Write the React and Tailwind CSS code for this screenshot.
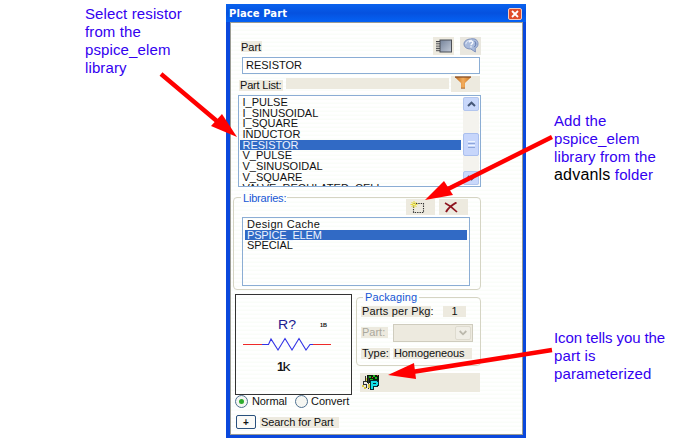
import React from "react";

const parts = ["I_PULSE", "I_SINUSOIDAL", "I_SQUARE", "INDUCTOR", "RESISTOR", "V_PULSE", "V_SINUSOIDAL", "V_SQUARE", "VALVE_REGULATED_CELL"];
const libraries = ["Design Cache", "PSPICE_ELEM", "SPECIAL"];

function Tag({ className = "", children }) {
  return <span className={`block shrink-0 whitespace-nowrap bg-[#edeadf] text-[11px] leading-[11px] h-[11px] ${className}`}>{children}</span>;
}

function ScrollButton({ down }) {
  return (
    <div className="flex h-[14px] w-[16px] shrink-0 items-center justify-center rounded-[2px] border border-[#b3c6ee] bg-[#c9d8fb]">
      <svg width="9" height="6" viewBox="0 0 9 6" fill="none" stroke="#465878" strokeWidth="2">
        <path d={down ? "M1 1L4.5 4.3L8 1" : "M1 5L4.5 1.7L8 5"} />
      </svg>
    </div>
  );
}

function PartIcon() {
  return (
    <svg width="18" height="14" viewBox="0 0 18 14">
      <defs>
        <linearGradient id="chip" x1="0" y1="0" x2="1" y2="1">
          <stop offset="0" stopColor="#75839a" />
          <stop offset="1" stopColor="#c3cbd8" />
        </linearGradient>
      </defs>
      <rect x="5" y="1" width="11.5" height="12" fill="url(#chip)" stroke="#4b4e56" />
      <path d="M1 2.5h4M1 4.8h4M1 7.1h4M1 9.4h4M1 11.7h4" stroke="#45464a" />
      <path d="M1 3.6h3M1 6h3M1 8.3h3M1 10.6h3" stroke="#b5b3ad" strokeWidth=".7" />
    </svg>
  );
}

function HelpIcon() {
  return (
    <svg width="16" height="15" viewBox="0 0 16 15">
      <path d="M7.5 1C12 0 15 2 15 5.8C15 8 14 9.7 12.2 10.3L12.4 14L7.8 11C3.5 11 1 9 1 6C1 3.2 3.5 1.3 7.5 1Z" fill="#a9bbdc" stroke="#7f92bd" />
      <path d="M2.7 6.2C3 3.5 6 2.1 9 2.4" stroke="#e0e8f7" strokeWidth="1.2" fill="none" />
      <path d="M6.2 4.4C6.6 2.6 10 2.6 9.8 4.6C9.7 5.9 8 5.8 8 7.2M8 8.2V9.4" stroke="#f6f9ff" strokeWidth="1.4" fill="none" />
      <path d="M11.7 3.2C13.5 5 13 7.5 11.2 9.2" stroke="#6178ae" fill="none" />
    </svg>
  );
}

function FilterIcon() {
  return (
    <svg width="18" height="13" viewBox="0 0 18 13">
      <defs>
        <linearGradient id="funnel">
          <stop offset="0" stopColor="#b8661f" />
          <stop offset=".5" stopColor="#f3ad5c" />
          <stop offset="1" stopColor="#c8701f" />
        </linearGradient>
      </defs>
      <path d="M.8 1h16.4L11 7v5.2H7V7Z" fill="url(#funnel)" />
      <path d="M1 1h16" stroke="#8c5127" strokeWidth="1.3" />
      <path d="M7 12.2h4" stroke="#9a5a24" strokeWidth=".8" />
    </svg>
  );
}

function Resistor() {
  return (
    <svg width="115" height="99" viewBox="0 0 115 99" fontFamily="'Liberation Sans', Arial, sans-serif">
      <text x="42" y="34" fontSize="12" fill="#202090" textLength="18" lengthAdjust="spacingAndGlyphs">R?</text>
      <text x="84" y="32" fontSize="5.5" fontWeight="bold" fill="#111">1B</text>
      <path d="M7 49.5h19M77 49.5h18" stroke="#ee2929" strokeWidth="1.1" />
      <path d="M26 49.5h6.5L35 44l7 11l7-11.5L56 55l7-11.5L70 55l4-5.5h3" fill="none" stroke="#3333e6" strokeWidth="1.1" />
      <text x="41" y="76" fontSize="12.5" fontWeight="bold" fill="#151515">1</text>
      <text x="46.5" y="76" fontSize="12" fill="#151515" textLength="8" lengthAdjust="spacingAndGlyphs">k</text>
    </svg>
  );
}

function ParamIcon() {
  return (
    <svg width="18" height="17" viewBox="0 0 18 17" shapeRendering="crispEdges">
      <path d="M5 1h12v8H5z" fill="#0a200a" />
      <path d="M7 2h2v2H7zM11 1h2v2h-2zM13 3h2v2h-2zM8 5h3v1H8z" fill="#20b920" />
      <path d="M10 3h1v1h-1zM15 1h1v1h-1z" fill="#d33a2a" />
      <path d="M3 2v5M1 7h4M1 7v3M1 10h3M4 10v4M6 2v13" stroke="#333" fill="none" />
      <path d="M0 11h2v2H0zM2 13h2v2H2zM4 4h1v3H4zM6 10h2v4H6z" fill="#dccb46" />
      <path d="M8 6h8v1h1v5h-1v1h-4v3H8z" fill="#062c35" />
      <path d="M9 7h6v1h1v3h-1v1h-4v3H9z" fill="#15dfe7" />
      <path d="M11 9h3v1h-3z" fill="#082b34" />
    </svg>
  );
}

function Radio({ checked }) {
  return (
    <span className="flex h-[13px] w-[13px] shrink-0 items-center justify-center rounded-full border border-[#4f7191] bg-[#f5f6f2]">
      {checked && <span className="h-[5px] w-[5px] rounded-full bg-[#2eac2e]" />}
    </span>
  );
}

function PlacePartDialog() {
  return (
    <div className="mt-[4px] flex h-[434px] w-[300px] shrink-0 flex-col bg-[#0a48dc] text-[11px] text-[#111]">
      <div className="flex h-[18px] shrink-0 items-center justify-between bg-linear-to-b from-[#0a62ee] via-[#0551df] to-[#0562f4] pr-[4px] pl-[3px]">
        <span className="pt-[2px] font-['DejaVu_Sans',Verdana,sans-serif] text-[10px] leading-[18px] font-bold tracking-[0.08px] text-white">Place Part</span>
        <span className="mt-[1px] flex h-[12px] w-[14px] items-center justify-center rounded-[2px] border border-[#f6c9bd] bg-[#df4b28]">
          <svg width="8" height="8" viewBox="0 0 8 8" stroke="#fff" strokeWidth="1.8"><path d="M1 1l6 6M7 1L1 7" /></svg>
        </span>
      </div>
      <div className="mr-[3px] ml-[4px] flex h-[413px] flex-col border border-[#9b9c94] bg-[repeating-linear-gradient(to_bottom,#fff_0px,#fff_2px,#fafdf9_3px,#fafdf9_4px)]">
        <div className="mt-[14px] ml-[10px] flex h-[18px]">
          <Tag className="mt-[4px] w-[21px] leading-[12px]">Part</Tag>
          <div className="ml-[171px] flex h-[18px] w-[21px] items-center justify-center bg-[#edeadf]"><PartIcon /></div>
          <div className="ml-[6px] flex h-[18px] w-[21px] items-start justify-center bg-[#e9e7df] pt-[1px]"><HelpIcon /></div>
        </div>
        <div className="mt-[2px] ml-[11px] h-[17px] w-[238px] border border-[#8badd4] bg-white pl-[3px] leading-[15px]">RESISTOR</div>
        <div className="mt-[2px] ml-[8px] flex h-[16px]">
          <Tag className="mt-[4px] w-[44px] pl-px tracking-[-0.2px]">Part List:</Tag>
          <div className="mt-[2px] ml-[3px] h-[11px] w-[163px] bg-[#edeadf]" />
          <div className="ml-[2px] flex h-[16px] w-[29px] justify-start bg-[#edeadf] pl-[3px]"><FilterIcon /></div>
        </div>
        <div className="mt-[3px] ml-[7px] flex h-[92px] w-[243px] shrink-0 justify-between border border-[#8badd4] bg-[repeating-linear-gradient(to_bottom,#fff_0px,#fff_2px,#fafdf9_3px,#fafdf9_4px)] p-px">
          <div className="h-[89px] w-[221px] overflow-hidden">
            {parts.map((p) => (
              <div key={p} className={`h-[10.7px] pl-[2.5px] leading-[11px] whitespace-nowrap ${p === "RESISTOR" ? "bg-[#316ac5] text-[#edf3ff]" : ""}`}>{p}</div>
            ))}
          </div>
          <div className="flex h-[88px] w-[16px] flex-col justify-between bg-[#f4f3ee]">
            <ScrollButton />
            <div className="mt-[6px] flex h-[23px] flex-col items-center justify-center gap-px rounded-[2px] border border-[#aabfee] bg-[#c7d6fb]">
              <i className="h-px w-[7px] bg-[#eef4fe]" /><i className="h-px w-[7px] bg-[#8ea6da]" /><i className="h-px w-[7px] bg-[#eef4fe]" /><i className="h-px w-[7px] bg-[#8ea6da]" />
            </div>
            <ScrollButton down />
          </div>
        </div>
        <div className="mt-[10px] ml-[2px] flex h-[93px] w-[248px] shrink-0 flex-col rounded-[4px] border border-[#d5d4c3]">
          <div className="flex h-[19px]">
            <span className="-mt-[6px] ml-[7px] h-[12px] w-[46px] bg-[#fdfefc] pl-[2px] leading-[12px] tracking-[-0.2px] text-[#1657d5]">Libraries:</span>
            <div className="mt-[1px] ml-[119px] flex h-[16px] w-[29px] items-center justify-center bg-[#edeadf] pr-[5px]">
              <svg width="16" height="13" viewBox="0 0 16 13">
                <path d="M3.5 2.5h10v9h-10z" fill="none" stroke="#333" strokeWidth="1.1" strokeDasharray="1.4 1" />
                <path d="M4 0v7M.5 3.5h7M1.5 1l5 5M6.5 1l-5 5" stroke="#e8dc32" strokeWidth="1" />
                <path d="M3.5 3h1v1h-1z" fill="#fff" />
              </svg>
            </div>
            <div className="mt-[1px] ml-[4px] flex h-[16px] w-[29px] items-center justify-center bg-[#edeadf] pr-[5px]">
              <svg width="14" height="11" viewBox="0 0 14 11" fill="none" stroke="#8e1620"><path d="M1 1C4 2.5 9 6 13 10" strokeWidth="1.7" /><path d="M12.500.5C8 3 4 6.5 2 10" strokeWidth="2" /></svg>
            </div>
          </div>
          <div className="ml-[8px] h-[69px] w-[228px] border border-[#8badd4] pt-[1px] pr-[2px] pl-[2px]">
            {libraries.map((l) => (
              <div key={l} className={`h-[10.7px] pl-[2px] leading-[11px] whitespace-nowrap ${l === "PSPICE_ELEM" ? "bg-[#316ac5] tracking-[-0.15px] text-[#edf3ff]" : l === "SPECIAL" ? "-tracking-[0.1px]" : "tracking-[0.35px]"}`}>{l}</div>
            ))}
          </div>
        </div>
        <div className="mt-[4px] ml-[4px] flex h-[101px] shrink-0">
          <div className="h-[101px] w-[117px] shrink-0 border border-[#333]"><Resistor /></div>
          <div className="ml-[4px] flex w-[125px] flex-col">
            <div className="mt-[3px] flex h-[69px] flex-col rounded-[4px] border border-[#d5d4c3] pl-[4px]">
              <span className="-mt-[6px] ml-[2px] h-[11px] w-[56px] bg-[#fdfefc] pl-[2px] leading-[11px] tracking-[0.1px] text-[#1657d5]">Packaging</span>
              <div className="mt-[3px] flex">
                <Tag className="w-[70px] pl-px tracking-[0.15px]">Parts per Pkg:</Tag>
                <Tag className="ml-[12px] w-[23px] text-center">1</Tag>
              </div>
              <div className="mt-[7px] flex h-[18px]">
                <Tag className="mt-[3px] w-[27px] pl-px text-[#aaa89d]">Part:</Tag>
                <div className="ml-[5px] flex h-[18px] w-[80px] justify-end border border-[#cfccbe] bg-[#edeadf] p-px">
                  <span className="flex h-[14px] w-[16px] items-center justify-center rounded-[2px] border border-[#dedbcf] bg-[#f0eee6]">
                    <svg width="8" height="6" viewBox="0 0 8 6" fill="none" stroke="#bbb8ac" strokeWidth="1.8"><path d="M.7 1L4 4.3L7.3 1" /></svg>
                  </span>
                </div>
              </div>
              <div className="mt-[6px] flex">
                <Tag className="w-[29px] pl-px">Type:</Tag>
                <Tag className="ml-[3px] w-[79px] pl-px tracking-[-0.1px]">Homogeneous</Tag>
              </div>
            </div>
            <div className="mt-[7px] ml-[4px] h-[19px] w-[120px] bg-[#edeadf] pt-[1px] pl-[2px]"><ParamIcon /></div>
          </div>
        </div>
        <div className="ml-[4px] flex h-[13px] items-center">
          <Radio checked /><span className="ml-[4px] w-[43px] leading-[13px] tracking-[-0.1px]">Normal</span>
          <Radio /><span className="ml-[3px] leading-[13px] tracking-[-0.05px]">Convert</span>
        </div>
        <div className="mt-[7px] ml-[5px] flex h-[14px] items-center">
          <span className="flex h-[14px] w-[20px] items-center justify-center rounded-[2px] border border-[#29507d] bg-[#fafaf7] text-[10px] font-bold">+</span>
          <Tag className="ml-[4px] w-[79px] pl-px tracking-[-0.1px]">Search for Part</Tag>
        </div>
      </div>
    </div>
  );
}

export default function App() {
  return (
    <div className="relative flex h-[442px] w-[676px] overflow-hidden bg-white font-['Liberation_Sans',Arial,sans-serif]">
      <div className="w-[226px] shrink-0 pt-[5px] pl-[85px] text-[15px] leading-[18px] tracking-[0.12px] text-[#3300f0]">
        Select resistor<br />from the<br />pspice_elem<br />library
      </div>
      <PlacePartDialog />
      <div className="flex w-[150px] flex-col pt-[112px] pl-[28px] text-[15px] leading-[18px] tracking-[0.12px] whitespace-nowrap text-[#3300f0]">
        <p className="h-[72px]">Add the<br />pspice_elem<br />library from the<br /><span className="text-[16px] tracking-[0.2px] text-black">advanls</span> folder</p>
        <p className="mt-[145px]"><span className="tracking-[-0.08px]">Icon tells you the</span><br />part is<br />parameterized</p>
      </div>
      <svg className="pointer-events-none absolute inset-0" width="676" height="442" viewBox="0 0 676 442" fill="#ff0000" stroke="#ff0000">
        <path d="M161 74L218 122" strokeWidth="4.5" />
        <path d="M237 137L211 126L222 114Z" stroke="none" />
        <path d="M552 137L446 190" strokeWidth="4.5" />
        <path d="M425 200L444 181L453 195Z" stroke="none" />
        <path d="M552 350L412 372" strokeWidth="4.5" />
        <path d="M388 375L414 363L416 379Z" stroke="none" />
      </svg>
    </div>
  );
}
